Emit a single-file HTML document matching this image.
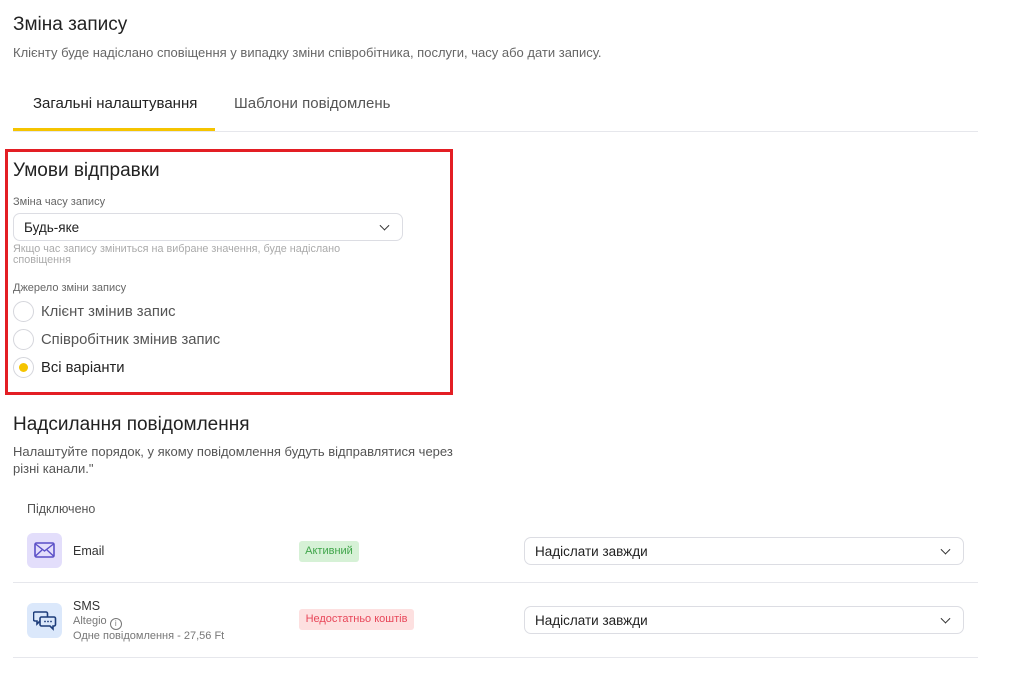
<!DOCTYPE html>
<html><head><meta charset="utf-8"><style>
*{box-sizing:border-box;margin:0;padding:0}
body{width:1024px;height:678px;background:#fff;font-family:"Liberation Sans","DejaVu Sans",sans-serif;color:#222;position:relative;overflow:hidden}
.a{position:absolute;white-space:nowrap}
.sel{position:absolute;border:1px solid #dcdde3;border-radius:7px;background:#fff;font-size:13.5px;color:#222;padding-left:10px;display:flex;align-items:center}
.chev{position:absolute;right:14px;top:50%;width:7px;height:7px;border-right:1.6px solid #333;border-bottom:1.6px solid #333;transform:translateY(-70%) rotate(45deg)}
.radio{position:absolute;left:13px;width:21px;height:21px;border:1px solid #d5d6dc;border-radius:50%;background:#fff}
.rl{position:absolute;left:41px;font-size:14.8px;color:#555}
.hr{position:absolute;left:13px;width:965px;height:1px;background:#e6e7ec}
</style></head><body>
<div class="a" style="left:13px;top:14px;font-size:19px;color:#222">Зміна запису</div>
<div class="a" style="left:13px;top:45px;font-size:13px;color:#666">Клієнту буде надіслано сповіщення у випадку зміни співробітника, послуги, часу або дати запису.</div>
<div class="a" style="left:33px;top:95px;font-size:15px;color:#222">Загальні налаштування</div>
<div class="a" style="left:234px;top:95px;font-size:15px;color:#555">Шаблони повідомлень</div>
<div class="hr" style="top:131px"></div>
<div style="position:absolute;left:13px;top:128px;width:202px;height:3px;background:#f5c400"></div>

<div style="position:absolute;left:5px;top:149px;width:448px;height:246px;border:3px solid #e31e24"></div>
<div class="a" style="left:13px;top:160px;font-size:19px;color:#222">Умови відправки</div>
<div class="a" style="left:13px;top:196px;font-size:11px;color:#666">Зміна часу запису</div>
<div class="sel" style="left:13px;top:213px;width:390px;height:28px">Будь-яке<span class="chev"></span></div>
<div class="a" style="left:13px;top:244px;font-size:10.8px;color:#aaa;line-height:11px">Якщо час запису зміниться на вибране значення, буде надіслано<br>сповіщення</div>
<div class="a" style="left:13px;top:282px;font-size:11px;color:#666">Джерело зміни запису</div>
<div class="radio" style="top:301px"></div><div class="rl a" style="top:304px">Клієнт змінив запис</div>
<div class="radio" style="top:329px"></div><div class="rl a" style="top:332px">Співробітник змінив запис</div>
<div class="radio" style="top:357px"><div style="position:absolute;left:5px;top:5px;width:9px;height:9px;border-radius:50%;background:#f5c400"></div></div><div class="rl a" style="top:360px;color:#222">Всі варіанти</div>

<div class="a" style="left:13px;top:414px;font-size:19px;color:#222">Надсилання повідомлення</div>
<div class="a" style="left:13px;top:443px;font-size:13px;color:#555;line-height:17px">Налаштуйте порядок, у якому повідомлення будуть відправлятися через<br>різні канали."</div>
<div class="a" style="left:27px;top:502px;font-size:12.5px;color:#555">Підключено</div>

<div style="position:absolute;left:27px;top:533px;width:35px;height:35px;border-radius:6px;background:#e3defb"></div>
<svg class="a" style="left:34px;top:542px" width="21" height="16" viewBox="0 0 21 16"><rect x="1" y="1" width="19" height="14" rx="1.5" fill="none" stroke="#5a4fc7" stroke-width="1.6"/><path d="M1.5 2 L10.5 9 L19.5 2 M1.5 14 L8 8 M19.5 14 L13 8" fill="none" stroke="#5a4fc7" stroke-width="1.4"/></svg>
<div class="a" style="left:73px;top:544px;font-size:12.5px;color:#333">Email</div>
<div class="a" style="left:299px;top:541px;width:60px;height:21px;border-radius:3px;background:#d6f1d6;color:#3fa54a;font-size:11px;text-align:center;line-height:21px">Активний</div>
<div class="sel" style="left:524px;top:537px;width:440px;height:28px">Надіслати завжди<span class="chev"></span></div>
<div class="hr" style="top:582px"></div>

<div style="position:absolute;left:27px;top:603px;width:35px;height:35px;border-radius:6px;background:#dbe8fb"></div>
<svg class="a" style="left:33px;top:609px" width="24" height="22" viewBox="0 0 24 22"><path d="M2 3 h11 a1.5 1.5 0 0 1 1.5 1.5 v6 a1.5 1.5 0 0 1 -1.5 1.5 h-6 l-3 3 v-3 h-2 a1.5 1.5 0 0 1 -1.5-1.5 v-6 a1.5 1.5 0 0 1 1.5-1.5z" fill="none" stroke="#1c3c7a" stroke-width="1.6"/><path d="M8 8 h13 a1.5 1.5 0 0 1 1.5 1.5 v6 a1.5 1.5 0 0 1 -1.5 1.5 h-1 v3 l-3-3 h-8.5 a1.5 1.5 0 0 1 -1.5-1.5 v-6 a1.5 1.5 0 0 1 1.5-1.5z" fill="#dbe8fb" stroke="#1c3c7a" stroke-width="1.6"/><circle cx="12" cy="12.5" r="0.9" fill="#1c3c7a"/><circle cx="15" cy="12.5" r="0.9" fill="#1c3c7a"/><circle cx="18" cy="12.5" r="0.9" fill="#1c3c7a"/></svg>
<div class="a" style="left:73px;top:599px;font-size:12.5px;color:#333">SMS</div>
<div class="a" style="left:73px;top:615px;font-size:11px;color:#777">Altegio <span style="display:inline-block;width:12px;height:12px;border:1px solid #777;border-radius:50%;font-size:8px;text-align:center;line-height:10px;vertical-align:-2px">i</span></div>
<div class="a" style="left:73px;top:630px;font-size:11px;color:#777">Одне повідомлення - 27,56 Ft</div>
<div class="a" style="left:299px;top:609px;width:115px;height:21px;border-radius:3px;background:#fde0e0;color:#e8475a;font-size:11px;text-align:center;line-height:21px">Недостатньо коштів</div>
<div class="sel" style="left:524px;top:606px;width:440px;height:28px">Надіслати завжди<span class="chev"></span></div>
<div class="hr" style="top:657px"></div>
</body></html>
